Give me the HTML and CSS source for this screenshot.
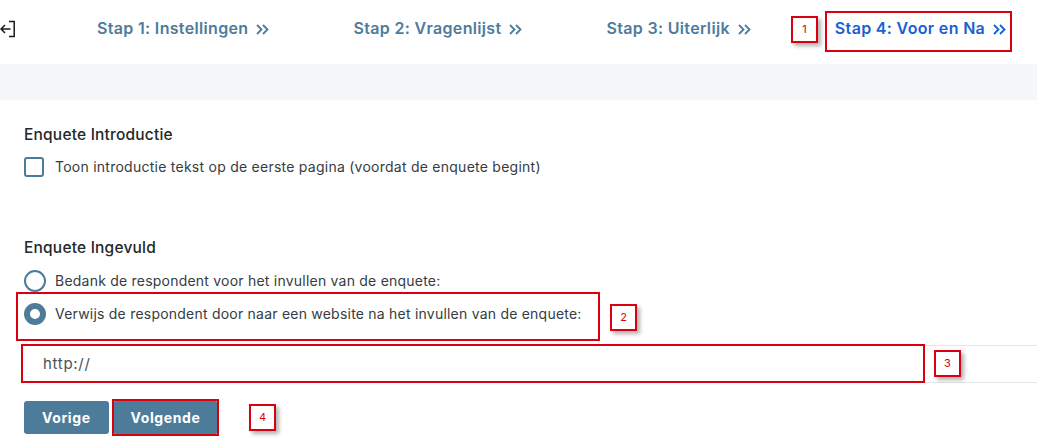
FILE: index.html
```html
<!DOCTYPE html>
<html lang="nl">
<head>
<meta charset="utf-8">
<title>Stap 4: Voor en Na</title>
<link rel="stylesheet" href="styles.css">
</head>
<body>
<header class="topbar">
  <svg class="exit-icon" width="16" height="18" viewBox="0 0 16 18" fill="none" stroke="#1a1a1a" stroke-width="1.5">
    <path d="M9 1.5h5.2v15H9"/>
    <path d="M10.5 9H1M5 5L1 9l4 4"/>
  </svg>
  <nav class="steps">
    <a class="step">Stap 1: Instellingen <svg class="chev" width="13" height="11" viewBox="0 0 13 11" fill="none" stroke="currentColor" stroke-width="1.8"><path d="M1 1l4.5 4.5L1 10M7 1l4.5 4.5L7 10"/></svg></a>
    <a class="step">Stap 2: Vragenlijst <svg class="chev" width="13" height="11" viewBox="0 0 13 11" fill="none" stroke="currentColor" stroke-width="1.8"><path d="M1 1l4.5 4.5L1 10M7 1l4.5 4.5L7 10"/></svg></a>
    <a class="step">Stap 3: Uiterlijk <svg class="chev" width="13" height="11" viewBox="0 0 13 11" fill="none" stroke="currentColor" stroke-width="1.8"><path d="M1 1l4.5 4.5L1 10M7 1l4.5 4.5L7 10"/></svg></a>
    <a class="step active">Stap 4: Voor en Na <svg class="chev" width="13" height="11" viewBox="0 0 13 11" fill="none" stroke="currentColor" stroke-width="1.8"><path d="M1 1l4.5 4.5L1 10M7 1l4.5 4.5L7 10"/></svg></a>
  </nav>
</header>
<div class="band"></div>
<main class="content">
  <section class="intro">
    <h2 class="title">Enquete Introductie</h2>
    <label class="option">
      <span class="checkbox"></span>
      <span>Toon introductie tekst op de eerste pagina (voordat de enquete begint)</span>
    </label>
  </section>
  <section class="done">
    <h2 class="title">Enquete Ingevuld</h2>
    <label class="option radio-row">
      <span class="radio"></span>
      <span>Bedank de respondent voor het invullen van de enquete:</span>
    </label>
    <label class="option radio-row">
      <span class="radio checked"></span>
      <span>Verwijs de respondent door naar een website na het invullen van de enquete:</span>
    </label>
    <div class="url-input">http://</div>
    <div class="buttons">
      <button class="btn">Vorige</button>
      <button class="btn">Volgende</button>
    </div>
  </section>
</main>

<div class="mark mark-step"></div>
<div class="mark mark-radio"></div>
<div class="mark mark-input"></div>
<div class="mark mark-next"></div>
<div class="tag tag-1">1</div>
<div class="tag tag-2">2</div>
<div class="tag tag-3">3</div>
<div class="tag tag-4">4</div>
</body>
</html>
```
FILE: styles.css
```css
* { box-sizing: border-box; }
html, body { margin: 0; padding: 0; }
body {
  width: 1037px;
  height: 445px;
  overflow: hidden;
  background: #fff;
  color: #2b3238;
  font-family: Inter, "Noto Sans", sans-serif;
  font-size: 14px;
  position: relative;
}
.topbar {
  height: 64px;
  display: flex;
  align-items: center;
  padding-bottom: 8px;
  background: #fff;
}
.exit-icon { margin-left: 0; margin-top: 2px; flex: none; }
.steps { display: flex; align-items: center; gap: 84px; margin-left: 81px; }
.step {
  display: flex;
  align-items: center;
  font-size: 16px;
  font-weight: 600;
  letter-spacing: 0.33px;
  color: #4d7c9b;
  white-space: nowrap;
}
.active { color: #1a5fd0; }
.chev { margin-left: 8px; margin-top: 2px; flex: none; }
.band { height: 36px; background: #f6f7f9; }
.content { padding: 26px 0 0 24px; }
.title {
  margin: 0;
  font-size: 15.5px;
  font-weight: 500;
  letter-spacing: 0.2px;
  line-height: 18px;
  color: #23282c;
}
.option {
  display: flex;
  align-items: center;
  gap: 11px;
  line-height: 20px;
  margin-top: 13px;
  color: #363c42;
  letter-spacing: 0.25px;
}
.checkbox {
  width: 20px;
  height: 20px;
  border: 2px solid #4d7c9b;
  border-radius: 3px;
  flex: none;
}
.done { margin-top: 62px; }
.done .radio-row { margin-top: 13px; height: 22px; gap: 9px; letter-spacing: 0.22px; }
.done .radio-row + .radio-row { margin-top: 11px; }
.radio {
  width: 22px;
  height: 22px;
  border: 2px solid #4d7c9b;
  border-radius: 50%;
  flex: none;
}
.radio.checked { border: 6px solid #4d7c9b; }
.url-input {
  margin-top: 20px;
  margin-left: -2px;
  height: 38px;
  border-top: 1px solid #e3e5e7;
  border-bottom: 1px solid #e3e5e7;
  padding-left: 21px;
  font-size: 15px;
  letter-spacing: 0.7px;
  line-height: 36px;
  color: #4a5056;
}
.buttons { display: flex; gap: 4px; margin-top: 18px; }
.btn {
  height: 33px;
  padding: 0 18px;
  border: 0;
  border-radius: 3px;
  background: #4d7c9b;
  color: #fff;
  font-family: inherit;
  font-size: 14px;
  font-weight: 700;
  letter-spacing: 0.6px;
}
.mark, .tag { position: absolute; border: 2px solid #d9000f; }
.mark-step { left: 825px; top: 11px; width: 187px; height: 41px; }
.mark-radio { left: 16px; top: 292px; width: 584px; height: 49px; }
.mark-input { left: 21px; top: 344px; width: 904px; height: 39px; }
.mark-next { left: 112px; top: 399px; width: 107px; height: 37px; }
.tag {
  width: 27px;
  height: 27px;
  background: #fff;
  color: #d9000f;
  font-size: 11px;
  line-height: 23px;
  text-align: center;
  box-shadow: 3px 3px 4px rgba(0, 0, 0, 0.3);
}
.tag-1 { left: 791px; top: 16px; }
.tag-2 { left: 610px; top: 304px; }
.tag-3 { left: 934px; top: 350px; }
.tag-4 { left: 249px; top: 404px; }
```
